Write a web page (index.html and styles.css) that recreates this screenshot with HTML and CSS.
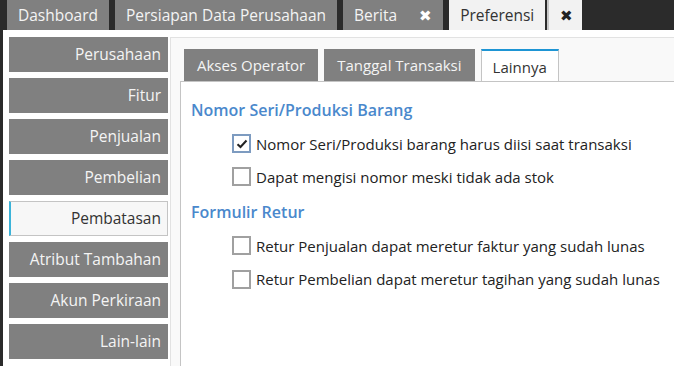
FILE: index.html
```html
<!DOCTYPE html>
<html>

<head>
    <title>Preferensi</title>
    <link rel="stylesheet" href="styles.css">
</head>

<body>
    <div class="topbar">
        <div class="top-tab">Dashboard</div>
        <div class="top-tab">Persiapan Data Perusahaan</div>
        <div class="top-tab">Berita <span class="close">&#10006;</span></div>
        <div class="top-tab active">Preferensi</div>
        <div class="top-tab active close-tab"><span class="close">&#10006;</span></div>
    </div>
    <div class="main">
        <div class="sidemenu">
            <div class="menu-item">Perusahaan</div>
            <div class="menu-item">Fitur</div>
            <div class="menu-item">Penjualan</div>
            <div class="menu-item">Pembelian</div>
            <div class="menu-item active">Pembatasan</div>
            <div class="menu-item">Atribut Tambahan</div>
            <div class="menu-item">Akun Perkiraan</div>
            <div class="menu-item">Lain-lain</div>
        </div>
        <div class="content">
            <div class="tabs">
                <div class="tab">Akses Operator</div>
                <div class="tab">Tanggal Transaksi</div>
                <div class="tab active">Lainnya</div>
            </div>
            <div class="panel">
                <h3 class="section-title">Nomor Seri/Produksi Barang</h3>
                <label class="check-row">
                    <span class="box checked focus">
                        <svg width="12" height="10" viewBox="0 0 12 10"><path d="M1.5 5.2 L4.5 8 L10.5 1.5" fill="none" stroke="#222" stroke-width="2"/></svg>
                    </span>
                    Nomor Seri/Produksi barang harus diisi saat transaksi
                </label>
                <label class="check-row">
                    <span class="box"></span>
                    Dapat mengisi nomor meski tidak ada stok
                </label>
                <h3 class="section-title">Formulir Retur</h3>
                <label class="check-row">
                    <span class="box"></span>
                    Retur Penjualan dapat meretur faktur yang sudah lunas
                </label>
                <label class="check-row">
                    <span class="box"></span>
                    Retur Pembelian dapat meretur tagihan yang sudah lunas
                </label>
            </div>
        </div>
    </div>
</body>

</html>
```

FILE: styles.css
```css
body {
    margin: 0;
    font-family: "Open Sans", "Noto Sans", sans-serif;
    background-color: #2b2b2b;
    overflow: hidden;
}

.topbar {
    display: flex;
    gap: 6px;
    height: 30px;
    padding-left: 7px;
}

.top-tab {
    display: flex;
    align-items: center;
    padding: 0 11px 0 11px;
    background-color: #808080;
    color: #f4f4f4;
    font-size: 15.5px;
    white-space: nowrap;
}

.top-tab .close {
    margin-left: 22px;
    font-size: 15px;
    color: #fff;
}

.top-tab.active {
    background-color: #f2f2f2;
    color: #333;
}

.top-tab.close-tab {
    margin-left: -4px;
    padding: 0 9px 0 11px;
    border-left: 2px solid #c8c8c8;
}

.top-tab.close-tab .close {
    margin-left: 0;
    color: #222;
}

.main {
    display: flex;
    box-sizing: border-box;
    margin-left: 3px;
    padding-top: 7px;
    height: 336px;
    overflow: hidden;
    background-color: #fff;
}

.sidemenu {
    display: flex;
    flex-direction: column;
    gap: 6px;
    width: 159px;
    padding-left: 6px;
}

.menu-item {
    height: 35px;
    line-height: 35px;
    padding-right: 7px;
    text-align: right;
    background-color: #808080;
    color: #f4f4f4;
    font-size: 15.5px;
    white-space: nowrap;
}

.menu-item.active {
    height: 33px;
    line-height: 33px;
    background-color: #f7f7f7;
    color: #333;
    border: 1px solid #c4c4c4;
    border-left: 2px solid #3bb3d9;
    padding-right: 6px;
}

.content {
    flex: 1;
    margin-left: 2px;
    padding: 11px 0 0 9px;
    border-top: 1px solid #e2e2e2;
    border-left: 1px solid #e2e2e2;
    background-color: #f9f9f9;
}

.tabs {
    display: flex;
    gap: 6px;
    padding-left: 4px;
}

.tab {
    height: 32px;
    line-height: 32px;
    padding: 0 13px;
    background-color: #808080;
    color: #f4f4f4;
    font-size: 15px;
    white-space: nowrap;
}

.tab.active {
    height: 30px;
    line-height: 32px;
    margin-bottom: -1px;
    padding: 0 11px;
    background-color: #fff;
    color: #333;
    border: 1px solid #c4c4c4;
    border-top: 2px solid #1e95d4;
    border-bottom: none;
    position: relative;
}

.panel {
    height: 280px;
    padding: 17px 0 0 10px;
    background-color: #fff;
    border-top: 1px solid #c4c4c4;
    border-left: 1px solid #c4c4c4;
}

.section-title {
    margin: 0 0 6px 0;
    font-size: 16px;
    font-weight: 600;
    color: #4a88cc;
    line-height: 22px;
}

.check-row {
    display: flex;
    align-items: center;
    height: 33px;
    padding-left: 41px;
    font-size: 15px;
    color: #222;
    white-space: nowrap;
}

.check-row + .section-title {
    margin-top: 8px;
    margin-bottom: 6px;
}

.check-row:last-child {
    height: 34px;
}

.box {
    display: flex;
    align-items: center;
    justify-content: center;
    box-sizing: border-box;
    width: 19px;
    height: 19px;
    margin-right: 5px;
    border: 2px solid #a0a0a0;
    background-color: #fff;
}

.box.focus {
    border-color: #7d9bc0;
}
```
